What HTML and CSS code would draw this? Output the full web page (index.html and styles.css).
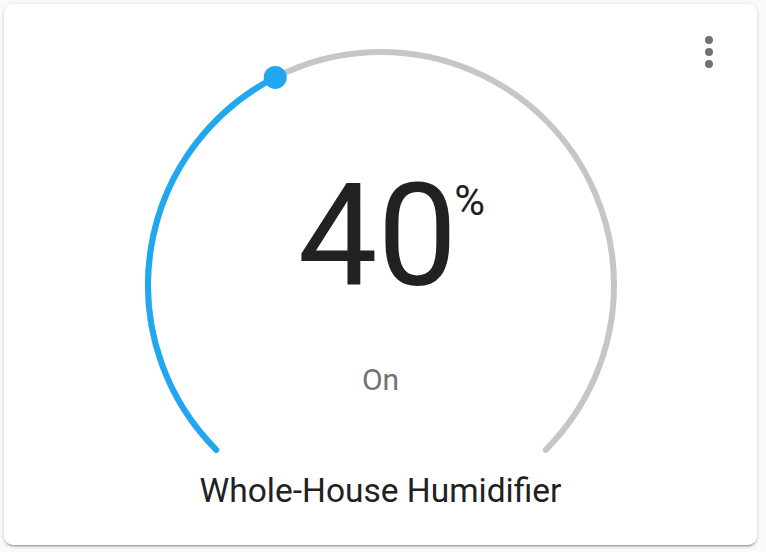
FILE: index.html
```
<!DOCTYPE html>
<html lang="en">
<head>
<meta charset="utf-8">
<title>Whole-House Humidifier</title>
<link rel="stylesheet" href="styles.css">
</head>
<body>
<div class="card">
  <button class="menu" aria-label="More options">
    <svg width="12" height="32" viewBox="0 0 12 32"><circle cx="6" cy="4" r="4"/><circle cx="6" cy="16" r="4"/><circle cx="6" cy="28" r="4"/></svg>
  </button>
  <div class="dial">
    <svg class="dial-svg" width="480" height="420" viewBox="0 0 480 420">
      <path class="track" d="M75.24 404.76 A233 233 0 1 1 404.76 404.76"/>
      <path class="bar" d="M75.24 404.76 A233 233 0 0 1 134.22 32.4"/>
      <circle class="handle" cx="134.22" cy="32.4" r="11.5"/>
    </svg>
    <div class="dial-content">
      <div class="value">40<span class="unit">%</span></div>
      <div class="state">On</div>
    </div>
  </div>
  <div class="name">Whole-House Humidifier</div>
</div>
</body>
</html>
```
FILE: styles.css
```
html, body {
  margin: 0;
  padding: 0;
}
body {
  background: #fafafa;
  padding: 4px;
  font-family: Roboto, "Liberation Sans", Arial, sans-serif;
}
.card {
  position: relative;
  box-sizing: border-box;
  width: 753px;
  height: 541px;
  background: #fff;
  border-radius: 9px;
  box-shadow: 0 2px 2px 0 rgba(0,0,0,0.14), 0 1px 5px 0 rgba(0,0,0,0.12), 0 3px 1px -2px rgba(0,0,0,0.2);
  padding-top: 41px;
  display: flex;
  flex-direction: column;
  align-items: center;
}
.menu {
  position: absolute;
  top: 32px;
  right: 42px;
  padding: 0;
  border: 0;
  background: none;
  width: 12px;
  height: 32px;
  fill: #727272;
}
.menu svg { display: block; }
.dial {
  position: relative;
  width: 480px;
  height: 420px;
}
.dial-svg {
  display: block;
  fill: none;
}
.track {
  stroke: #c6c6c6;
  stroke-width: 6;
  stroke-linecap: round;
  fill: none;
}
.bar {
  stroke: #1fa8f1;
  stroke-width: 6;
  stroke-linecap: round;
  fill: none;
}
.handle {
  fill: #1fa8f1;
}
.dial-content {
  position: absolute;
  inset: 0;
  padding-top: 121px;
  display: flex;
  flex-direction: column;
  align-items: center;
}
.value {
  position: relative;
  font-size: 142px;
  line-height: 142px;
  color: #212121;
  margin-left: -6px;
}
.unit {
  position: absolute;
  left: 100%;
  top: 14px;
  margin-left: -3px;
  font-size: 42px;
  line-height: 42px;
}
.state {
  margin-top: 57px;
  font-size: 30px;
  line-height: 30px;
  color: #727272;
}
.name {
  margin-top: 8px;
  font-size: 33.5px;
  line-height: 36px;
  color: #212121;
}
```
